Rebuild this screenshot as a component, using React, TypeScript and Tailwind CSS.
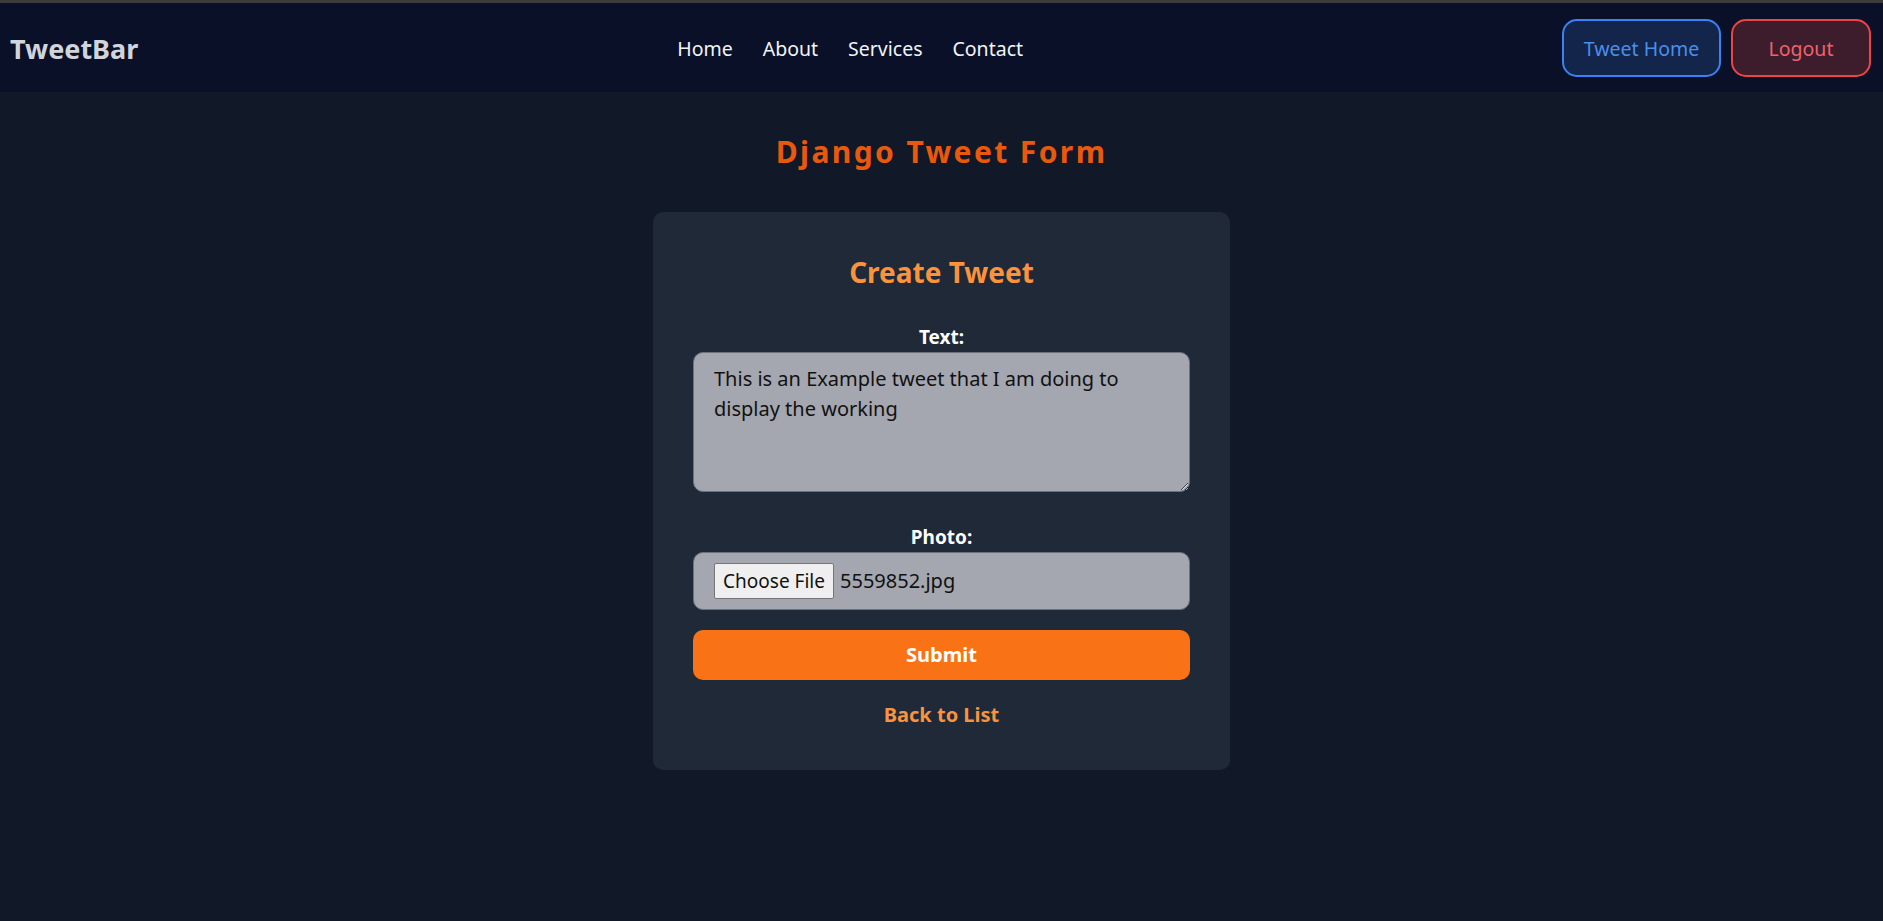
import React from "react";

export default function App() {
  const font = { fontFamily: '"Noto Sans", "Open Sans", sans-serif' };
  return (
    <div className="min-h-screen bg-[#111827]" style={font}>
      <div className="h-[3px] bg-[#3c3c3c]" />
      <nav className="flex h-[89px] items-center justify-between bg-[#0a1027] pl-[10px] pr-[12px]">
        <div className="pt-[2px] text-[27px] font-bold leading-none text-[#d1d5db]">TweetBar</div>
        <div className="flex items-center gap-[30px] pt-[2px] text-[19.5px] text-[#f3f4f6]">
          <a>Home</a>
          <a>About</a>
          <a>Services</a>
          <a>Contact</a>
        </div>
        <div className="flex items-center gap-[10px]">
          <button className="flex h-[58px] w-[159px] items-center justify-center rounded-[15px] border-[2.5px] border-[#3b82f6] bg-[#13254b] pt-[2px] text-[19.5px] text-[#4a8fe8]">
            Tweet Home
          </button>
          <button className="flex h-[58px] w-[140px] items-center justify-center rounded-[15px] border-[2.5px] border-[#ef4444] bg-[#3d1d2b] pt-[2px] text-[19.5px] text-[#f0616b]">
            Logout
          </button>
        </div>
      </nav>

      <h1 className="mb-[40px] mt-[40px] text-center text-[30px] font-bold leading-[40px] tracking-[0.08em] text-[#ea580c]">
        Django Tweet Form
      </h1>

      <div className="mx-auto w-[577px] rounded-[10px] bg-[#1f2937] p-[40px]">
        <h2 className="mb-[30px] text-center text-[28px] font-bold leading-[40px] text-[#fb923c]">
          Create Tweet
        </h2>

        <div className="mb-[30px]">
          <label className="block text-center text-[19px] font-bold leading-[30px] text-white">Text:</label>
          <textarea
            className="block h-[140px] w-full rounded-[10px] border border-[#6b7280] bg-[#a4a7af] px-[20px] pb-[10px] pt-[11px] text-[20px] leading-[30px] text-[#111111] outline-none"
            defaultValue="This is an Example tweet that I am doing to display the working"
            style={font}
          />
        </div>

        <div>
          <label className="block text-center text-[19px] font-bold leading-[30px] text-white">Photo:</label>
          <div className="flex h-[58px] w-full items-center rounded-[10px] border border-[#6b7280] bg-[#a4a7af] px-[20px]">
            <span className="flex h-[36px] w-[120px] items-center justify-center rounded-[2px] border border-[#767676] bg-[#efefef] text-[19px] text-[#111111]">
              Choose File
            </span>
            <span className="ml-[6px] text-[20px] text-[#111111]">5559852.jpg</span>
          </div>
        </div>

        <button className="mt-[20px] block h-[50px] w-full rounded-[10px] bg-[#f97316] text-[20px] font-bold text-white">
          Submit
        </button>

        <div className="mt-[20px] text-center text-[20px] font-bold leading-[30px] text-[#fb923c]">
          Back to List
        </div>
      </div>
    </div>
  );
}
